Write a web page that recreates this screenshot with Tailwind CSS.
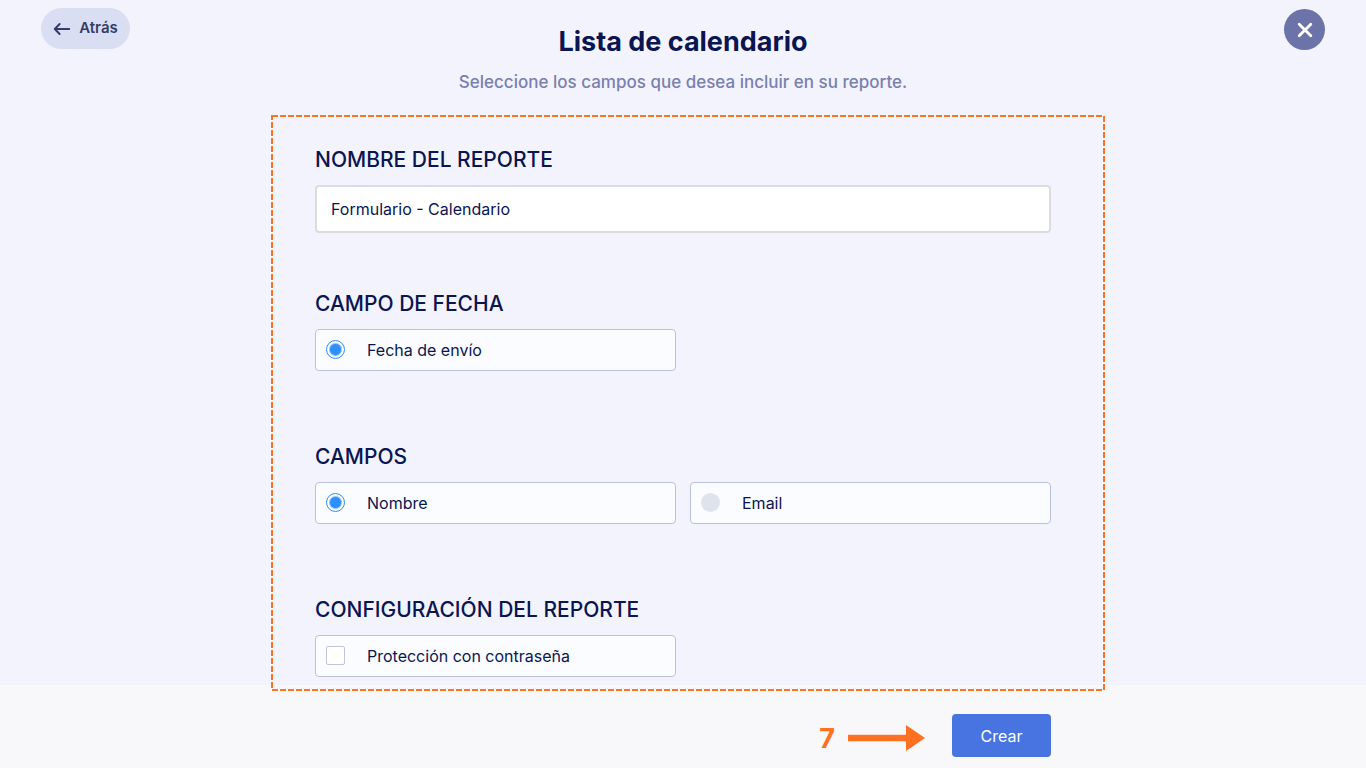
<!DOCTYPE html>
<html lang="es">
<head>
<meta charset="UTF-8" />
<meta name="viewport" content="width=device-width, initial-scale=1">
<title>Lista de calendario</title>
<script src="https://cdn.jsdelivr.net/npm/@tailwindcss/browser@4"></script>
</head>
<body class="flex min-h-screen flex-col bg-[#f3f3fe] font-['Inter',sans-serif] text-[#0a1551]">

<header class="grid grid-cols-[1fr_auto_1fr] items-start px-[41px] pt-2">
  <button type="button" class="flex h-[41px] w-[89px] items-center justify-center gap-2 rounded-full bg-[#dadef3] text-[15px] font-semibold text-[#343c6a]">
    <svg class="h-4 w-[18px]" viewBox="0 0 18 16" fill="none" stroke="currentColor" stroke-width="2" stroke-linecap="round" stroke-linejoin="round" aria-hidden="true">
      <path d="M16.2 8H2M6.6 3 1.8 8 6.6 13" />
    </svg>
    Atrás
  </button>

  <div class="pt-4 text-center">
    <h1 class="text-[27px] leading-9 font-bold">Lista de calendario</h1>
    <p class="mt-2 text-[17px] leading-7 font-medium text-[#7980b0]">Seleccione los campos que desea incluir en su reporte.</p>
  </div>

  <button type="button" aria-label="Cerrar" class="mt-px flex size-[41px] items-center justify-center justify-self-end rounded-full bg-[#6c73a8] text-white">
    <svg class="size-4" viewBox="0 0 16 16" fill="none" stroke="currentColor" stroke-width="2.8" stroke-linecap="round" aria-hidden="true">
      <path d="M2.2 2.2l11.6 11.6M13.8 2.2 2.2 13.8" />
    </svg>
  </button>
</header>

<main class="px-4 pt-[49px] pb-2">
  <form id="reporte" class="relative mx-auto max-w-[736px]">

    <!-- Nombre -->
    <section class="mb-14">
      <h2 class="mb-2.5 text-[21px] leading-[30px] font-medium"><label for="nombre">NOMBRE DEL REPORTE</label></h2>
      <input id="nombre" type="text" value="Formulario - Calendario" class="block h-12 w-full rounded-sm border-2 border-[#dcdcdf] bg-white px-[14px] text-base">
    </section>

    <!-- Campo de fecha -->
    <section class="mb-[71px]">
      <h2 class="mb-2.5 text-[21px] leading-[30px] font-medium">CAMPO DE FECHA</h2>
      <div class="grid grid-cols-2 gap-[14px]">
        <label class="flex h-[42px] items-center gap-[22px] rounded-sm border border-[#b9c1de] bg-[#fbfcff] px-[10px] pb-px text-base">
          <input type="radio" name="fecha" checked class="size-[19px] shrink-0 appearance-none rounded-full bg-[#dfe3ed] checked:border checked:border-[#2e90ff] checked:bg-[radial-gradient(circle,#2e90ff_5px,#ffffff_7px)]">
          Fecha de envío
        </label>
      </div>
    </section>

    <!-- Campos -->
    <section class="mb-[71px]">
      <h2 class="mb-2.5 text-[21px] leading-[30px] font-medium">CAMPOS</h2>
      <div class="grid grid-cols-2 gap-[14px]">
        <label class="flex h-[42px] items-center gap-[22px] rounded-sm border border-[#b9c1de] bg-[#fbfcff] px-[10px] pb-px text-base">
          <input type="radio" name="campos" checked class="size-[19px] shrink-0 appearance-none rounded-full bg-[#dfe3ed] checked:border checked:border-[#2e90ff] checked:bg-[radial-gradient(circle,#2e90ff_5px,#ffffff_7px)]">
          Nombre
        </label>
        <label class="flex h-[42px] items-center gap-[22px] rounded-sm border border-[#b9c1de] bg-[#fbfcff] px-[10px] pb-px text-base">
          <input type="radio" name="campos" class="size-[19px] shrink-0 appearance-none rounded-full bg-[#dfe3ed] checked:border checked:border-[#2e90ff] checked:bg-[radial-gradient(circle,#2e90ff_5px,#ffffff_7px)]">
          Email
        </label>
      </div>
    </section>

    <!-- Configuración -->
    <section>
      <h2 class="mb-2.5 text-[21px] leading-[30px] font-medium">CONFIGURACIÓN DEL REPORTE</h2>
      <div class="grid grid-cols-2 gap-[14px]">
        <label class="flex h-[42px] items-center gap-[22px] rounded-sm border border-[#b9c1de] bg-[#fbfcff] px-[10px] pb-px text-base">
          <input type="checkbox" class="size-[19px] shrink-0 appearance-none rounded-xs border border-[#bfc5de] bg-white checked:bg-[#2e90ff]">
          Protección con contraseña
        </label>
      </div>
    </section>

    <!-- Marco de resaltado -->
    <div class="pointer-events-none absolute -top-[29px] -right-[53px] -bottom-[13px] -left-[43px] z-10">
      <svg class="size-full overflow-visible" aria-hidden="true">
        <rect width="100%" height="100%" fill="none" stroke="#ff7424" stroke-width="2" stroke-dasharray="6 2" />
      </svg>
    </div>
  </form>
</main>

<footer class="flex-1 bg-[#f8f8fb] px-4 pt-[29px] pb-[11px]">
  <div class="mx-auto flex max-w-[736px] items-center justify-end">
    <span class="mr-[13px] pt-1.5 text-[27px] leading-8 font-bold text-[#ff7020]">7</span>
    <svg class="mt-1 mr-[27px] h-[26px] w-[77px]" viewBox="0 0 77 26" fill="#ff7020" aria-hidden="true">
      <path d="M0 9.8h58V0l19 13-19 13v-9.8H0z" />
    </svg>
    <button type="submit" form="reporte" class="h-[43px] w-[99px] rounded-sm bg-[#4774e1] text-base text-white">Crear</button>
  </div>
</footer>

</body>
</html>
